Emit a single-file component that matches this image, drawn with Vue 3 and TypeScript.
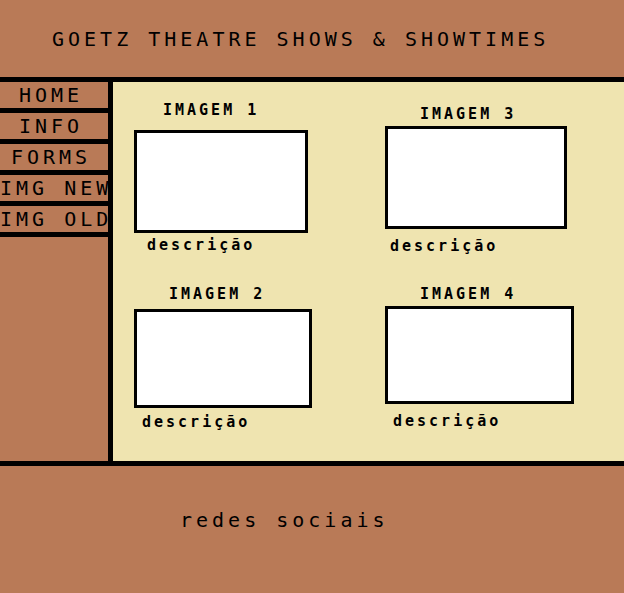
<script setup lang="ts">
interface Card {
  id: number
  title: string
  text: string
}

const links: string[] = ['HOME', 'INFO', 'FORMS', 'IMG NEW', 'IMG OLD']

const cards: Card[] = [1, 3, 2, 4].map((id) => ({
  id,
  title: `IMAGEM ${id}`,
  text: 'descrição',
}))
</script>

<template>
  <div class="page">
    <header class="header">
      <h1 class="title">GOETZ THEATRE SHOWS &amp; SHOWTIMES</h1>
    </header>
    <div class="body">
      <nav class="sidebar">
        <a v-for="link in links" :key="link" class="link" href="#">{{ link }}</a>
      </nav>
      <main class="gallery">
        <article v-for="card in cards" :key="card.id" class="card" :class="`card-${card.id}`">
          <h2 class="card-title">{{ card.title }}</h2>
          <div class="frame"></div>
          <p class="card-text">{{ card.text }}</p>
        </article>
      </main>
    </div>
    <footer class="footer">redes sociais</footer>
  </div>
</template>

<style>
body {
  margin: 0;
}
</style>

<style scoped>
.page {
  display: flex;
  flex-direction: column;
  box-sizing: border-box;
  min-height: 100vh;
  background: #b97a57;
  color: #000;
  font-family: 'DejaVu Sans Mono', 'Liberation Mono', monospace;
  font-size: 20px;
  line-height: 26px;
  letter-spacing: 4px;
}

.header {
  padding: 26px 0 25px 52px;
  border-bottom: 5px solid #000;
}

.title {
  margin: 0;
  font-size: 20px;
  font-weight: 400;
  white-space: nowrap;
}

.body {
  display: flex;
  flex: 1;
}

.sidebar {
  flex: 0 0 108px;
  border-right: 5px solid #000;
  overflow: hidden;
}

.link {
  display: block;
  padding-right: 6px;
  border-bottom: 5px solid #000;
  color: inherit;
  text-align: center;
  text-decoration: none;
  white-space: nowrap;
}

.gallery {
  flex: 1;
  display: grid;
  grid-template-columns: 1fr 1fr;
  align-content: start;
  gap: 28px 12px;
  padding: 18px 0 28px 21px;
  background: #efe4b0;
}

.card {
  font-size: 15px;
  font-weight: 700;
  line-height: 20px;
  letter-spacing: 3px;
}

.card-title {
  margin: 0;
  padding-left: 35px;
  font-size: 15px;
}

.frame {
  box-sizing: border-box;
  max-width: 100%;
  border: 3px solid #000;
  background: #fff;
}

.card-text {
  margin: 0;
  padding-left: 8px;
}

.card-1 .card-title {
  padding-left: 29px;
}

.card-1 .frame {
  width: 174px;
  height: 103px;
  margin: 10px 0 2px;
}

.card-1 .card-text {
  padding-left: 13px;
}

.card-2 .frame {
  width: 178px;
  height: 99px;
  margin: 5px 0 4px;
}

.card-3 {
  padding-top: 4px;
}

.card-3 .frame {
  width: 182px;
  height: 103px;
  margin: 2px 0 7px;
}

.card-3 .card-text {
  padding-left: 5px;
}

.card-4 .frame {
  width: 189px;
  height: 98px;
  margin: 2px 0 7px;
}

.footer {
  padding: 41px 0 55px 180px;
  border-top: 5px solid #000;
  min-height: 31px;
}
</style>
